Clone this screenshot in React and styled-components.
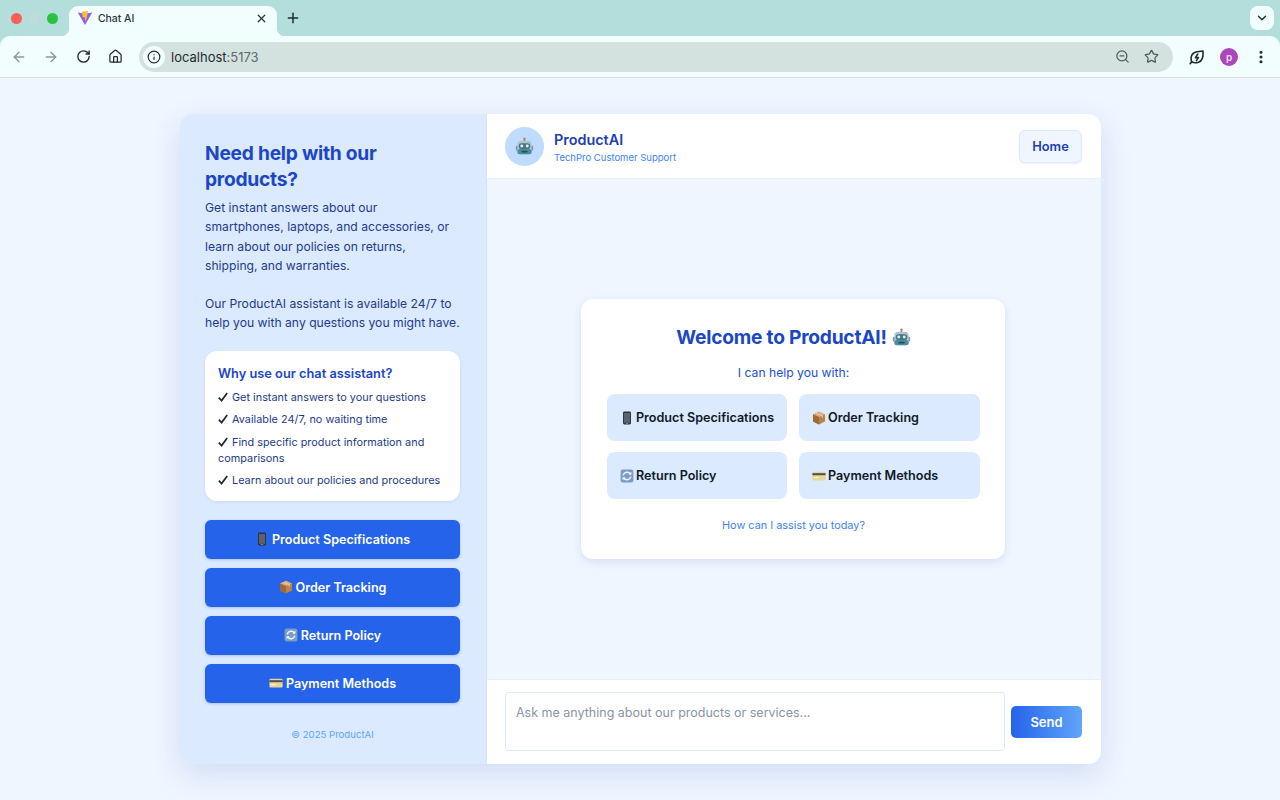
import React from "react";
import styled, { createGlobalStyle } from "styled-components";
import { ArrowLeft, ArrowRight, RotateCw, House, Info, ZoomOut, Star, X, Plus, ChevronDown, EllipsisVertical } from "lucide-react";

const Global = createGlobalStyle`
  html, body { margin: 0; padding: 0; height: 100%; background: #eff6ff; }
  body { font-family: Inter, "Liberation Sans", sans-serif; overflow: hidden; }
  * { box-sizing: border-box; }
`;

const Screen = styled.div`height: 800px; display: flex; flex-direction: column; background: #eff6ff;`;
const BrowserFrame = styled.header`background: #b3dedb; flex: none;`;
const TabStrip = styled.div`height: 36px; display: flex; align-items: center; padding: 0 6px 0 10.5px;`;
const Lights = styled.div`display: flex; gap: 7px; margin-right: 11.5px;`;
const Light = styled.span`width: 11px; height: 11px; border-radius: 50%; background: ${p => p.$c};`;
const Tab = styled.div`
  position: relative; width: 208px; height: 30px; margin-top: 6px; background: #f2fefe;
  border-radius: 9px 9px 0 0; display: flex; align-items: center; padding: 0 9px 6px 8px;
  color: #27363a; font-size: 10.4px;
  &::before, &::after { content: ""; position: absolute; bottom: 0; width: 8px; height: 8px; }
  &::before { left: -8px; background: radial-gradient(circle at 0 0, transparent 8px, #f2fefe 8.5px); }
  &::after { right: -8px; background: radial-gradient(circle at 100% 0, transparent 8px, #f2fefe 8.5px); }
`;
const TabTitle = styled.span`flex: 1; margin-left: 5px; font-weight: 500;`;
const NewTab = styled.span`display: flex; margin-left: 8px; color: #1e2c2e;`;
const Spacer = styled.div`flex: 1;`;
const TabMenu = styled.span`width: 24px; height: 24px; border-radius: 8px; background: #f2fefe; display: flex; align-items: center; justify-content: center; color: #1e2c2e;`;
const Toolbar = styled.div`
  height: 42px; background: #f2fefe; border-radius: 10px 10px 0 0; border-bottom: 1px solid #d3dede;
  display: flex; align-items: center; padding: 0 3px;
`;
const ToolButton = styled.span`width: 32px; height: 32px; display: flex; align-items: center; justify-content: center; color: ${p => p.$c || "#1f2b2d"}; flex: none;`;
const Omnibox = styled.div`flex: 1; height: 30px; margin: 0 8px 0 8px; border-radius: 15px; background: #d4e2df; display: flex; align-items: center; padding: 0 7px 0 4px;`;
const InfoChip = styled.span`width: 22px; height: 22px; border-radius: 50%; background: #f2fefe; display: flex; align-items: center; justify-content: center; color: #1f2b2d;`;
const Url = styled.span`flex: 1; margin-left: 6px; font-size: 13px; color: #1f2b2d; b { font-weight: 400; color: #5c6a6b; }`;
const OmniIcon = styled.span`width: 29px; display: flex; justify-content: center; color: #4e5b5c;`;
const Avatar = styled.span`width: 18px; height: 18px; border-radius: 50%; background: #ab47bc; color: #f4dcf8; font-size: 10px; font-weight: 600; display: flex; align-items: center; justify-content: center;`;

const Stage = styled.main`flex: 1; display: flex; justify-content: center; padding-top: 36px; padding-left: 1px;`;
const Card = styled.div`width: 921px; height: 650px; border-radius: 13px; overflow: hidden; display: flex; box-shadow: 0 10px 32px rgba(30,64,175,.14);`;
const Sidebar = styled.aside`width: 307px; flex: none; background: #dbeafe; padding: 27px 26px 0 25px; display: flex; flex-direction: column; border-right: 1px solid #d5e3f8;`;
const SideTitle = styled.h1`margin: 0 0 6px; font-size: 19.2px; line-height: 25.6px; font-weight: 700; color: #1c47c4; letter-spacing: -.24px;`;
const SideText = styled.p`margin: 0 0 19.2px; font-size: 12.16px; line-height: 19.2px; color: #1e3a8a;`;
const Benefits = styled.section`margin-top: -0.8px; height: 150px; background: #fff; border-radius: 12px; padding: 14px 13px 0; box-shadow: 0 1px 3px rgba(30,64,175,.1);`;
const BenefitsTitle = styled.h2`margin: 0 0 6px; font-size: 12.8px; line-height: 18px; font-weight: 600; color: #1c47c4;`;
const BenefitList = styled.ul`list-style: none; margin: 0; padding: 0; display: flex; flex-direction: column; gap: 6.4px;`;
const Benefit = styled.li`font-size: 10.88px; line-height: 16px; color: #1e3a8a;`;
const TickMark = styled.svg`width: 10px; height: 10px; margin-right: 4px; vertical-align: -1px; fill: none; stroke: #1f2937; stroke-width: 1.7;`;
const ActionStack = styled.div`margin-top: 19px; display: flex; flex-direction: column; gap: 9px;`;
const ActionButton = styled.button`
  height: 39px; border: 0; border-radius: 6px; background: #2563eb; color: #fff; font: 600 12.6px Inter, sans-serif;
  display: flex; align-items: center; justify-content: center; gap: 3px; box-shadow: 0 1px 3px rgba(30,64,175,.25);
`;
const Copyright = styled.footer`margin-top: 25px; text-align: center; font-size: 9.6px; line-height: 13px; color: #60a5fa;`;

const ChatPane = styled.section`flex: 1; display: flex; flex-direction: column; min-width: 0; background: #eff6ff;`;
const ChatHeader = styled.div`height: 65px; flex: none; background: #fff; border-bottom: 1px solid #e6effc; display: flex; align-items: center; padding: 0 19px 0 18px;`;
const Bot = styled.span`width: 39px; height: 39px; border-radius: 50%; background: #bfdbfe; display: flex; align-items: center; justify-content: center;`;
const Brand = styled.div`margin: 2px 0 0 10px; flex: 1;`;
const BrandName = styled.div`font-size: 14.4px; line-height: 18px; font-weight: 600; color: #1e40af;`;
const BrandSub = styled.div`margin-top: 2px; font-size: 9.5px; line-height: 13px; color: #3b82f6;`;
const HomeButton = styled.button`width: 63px; height: 33px; border-radius: 6px; border: 1px solid #dbeafe; background: #eff6ff; color: #1e40af; font: 600 12.8px Inter, sans-serif; box-shadow: 0 1px 2px rgba(30,64,175,.08);`;
const Messages = styled.div`flex: 1; display: flex; align-items: center; justify-content: center; padding-right: 2px;`;
const Welcome = styled.div`width: 424px; height: 260px; background: #fff; border-radius: 12px; padding: 25px 25px 0 26px; box-shadow: 0 3px 8px rgba(30,64,175,.12); display: flex; flex-direction: column; align-items: center;`;
const WelcomeTitle = styled.h2`margin: 0; font-size: 19.2px; line-height: 26px; font-weight: 700; color: #1c47c4; display: flex; align-items: center; gap: 5px; letter-spacing: -.24px;`;
const WelcomeSub = styled.p`margin: 14px 0 0; font-size: 12.16px; line-height: 18px; color: #1d4ed8;`;
const TopicGrid = styled.div`align-self: stretch; margin-top: 12px; display: grid; grid-template-columns: 180px 181px; gap: 11px 12px;`;
const Topic = styled.div`height: 47px; border-radius: 8px; background: #dbeafe; color: #111827; font-size: 12.6px; font-weight: 600; display: flex; align-items: center; gap: 2px; padding-left: 13px;`;
const Assist = styled.p`margin: 19px 0 0; font-size: 10.88px; line-height: 15px; color: #3b82f6;`;
const Composer = styled.form`height: 85px; flex: none; background: #fff; border-top: 1px solid #e6effc; display: flex; align-items: center; padding: 0 19px 2px 18px; gap: 6px;`;
const Input = styled.textarea`
  width: 500px; height: 59px; padding: 12px 10px 10px; border: 1px solid #dbeafe; border-radius: 3px; resize: none; outline: 0; margin: 0; background: #fff;
  font: 400 12.5px/16px Inter, sans-serif; color: #111827;
  &::placeholder { color: #8a94a3; opacity: 1; }
`;
const Send = styled.button`width: 71px; height: 32px; margin-top: 2px; border: 0; border-radius: 5px; background: linear-gradient(90deg,#2563eb,#60a5fa); color: #fff; font: 600 13px Inter, sans-serif;`;

const ViteLogo = () => (
  <svg width="16" height="16" viewBox="0 0 16 16"><path d="M.8 2.4 8 15 15.2 2.4 8 3.8Z" fill="#8b5cf6" /><path d="M5 1.4 11 .9 9.8 8 8.2 11.6 7.6 7 5.6 7.4Z" fill="#fbbf24" /></svg>
);
const LeafBolt = () => (
  <svg width="16" height="16" viewBox="0 0 16 16" fill="none" stroke="#1f2b2d" strokeWidth="1.6" strokeLinejoin="round" strokeLinecap="round">
    <path d="M2.4 12.6C1 8 3 3.4 8 2.8l6-.8c.4 5-.2 9.8-4.4 11.2-2.8.9-5.4.6-7.2-.6Z" />
    <path d="M8.8 5 6.4 8.6h3L7.4 11.6" />
    <path d="M1.2 14.6 3 12.8" />
  </svg>
);
const BotIcon = ({ s = 19 }) => (
  <svg width={s} height={s} viewBox="0 0 18 18">
    <rect x="8.3" y="1" width="1.4" height="3" fill="#8a6f66" /><circle cx="9" cy="1.6" r="1.1" fill="#d9795c" />
    <rect x=".8" y="8.4" width="2" height="4.4" rx="1" fill="#7b93a0" /><rect x="15.2" y="8.4" width="2" height="4.4" rx="1" fill="#7b93a0" />
    <rect x="2.2" y="3.6" width="13.6" height="12.8" rx="3.6" fill="#a9c5cf" />
    <rect x="2.2" y="11.4" width="13.6" height="5" rx="2.4" fill="#4a8c9b" />
    <rect x="3.6" y="6" width="10.8" height="5.4" rx="2.4" fill="#4d7380" />
    <circle cx="6.4" cy="8.6" r="1.4" fill="#cff3f4" /><circle cx="11.6" cy="8.6" r="1.4" fill="#cff3f4" />
    <rect x="6" y="13" width="6" height="1.6" rx=".8" fill="#1d5260" />
  </svg>
);
const PhoneIcon = () => (
  <svg width="14" height="14" viewBox="0 0 14 14"><rect x="3" y=".5" width="8" height="13" rx="1.4" fill="#2c3238" /><rect x="3.9" y="2" width="6.2" height="9.8" fill="#59636e" /><rect x="5.8" y="12.2" width="2.4" height=".7" fill="#9aa5ad" /></svg>
);
const BoxIcon = () => (
  <svg width="14" height="14" viewBox="0 0 14 14"><path d="M7 .8 13 3.4V10.6L7 13.4 1 10.6V3.4Z" fill="#b9824d" /><path d="M7 6 13 3.4 7 .8 1 3.4Z" fill="#dcae7b" /><path d="M7 6V13.4L1 10.6V3.4Z" fill="#a06a38" /><path d="M3.6 2.3 9.8 5V6.8L10.8 6.4V4.6L4.6 1.9Z" fill="#ecd2ad" /></svg>
);
const ReturnIcon = () => (
  <svg width="14" height="14" viewBox="0 0 14 14"><rect x=".6" y=".6" width="12.8" height="12.8" rx="2.2" fill="#7b9cc4" /><path d="M3.2 6.4A4 4 0 0 1 10.4 5M10.8 7.6A4 4 0 0 1 3.6 9" fill="none" stroke="#f2f5f8" strokeWidth="1.5" /><path d="M11.4 2.8V5.8H8.4ZM2.6 11.2V8.2H5.6Z" fill="#f2f5f8" /></svg>
);
const CardIcon = () => (
  <svg width="14" height="14" viewBox="0 0 14 14"><rect x=".4" y="2.8" width="13.2" height="8.6" rx="1.2" fill="#e8d59a" /><rect x=".4" y="4.2" width="13.2" height="2" fill="#4a4f52" /><rect x="1.6" y="8" width="5" height="1" fill="#fff5d2" /></svg>
);

const topics = [
  [<PhoneIcon key="a" />, "Product Specifications"],
  [<BoxIcon key="b" />, "Order Tracking"],
  [<ReturnIcon key="c" />, "Return Policy"],
  [<CardIcon key="d" />, "Payment Methods"],
];
const benefits = [
  "Get instant answers to your questions",
  "Available 24/7, no waiting time",
  "Find specific product information and comparisons",
  "Learn about our policies and procedures",
];

export default function App() {
  return (
    <Screen>
      <Global />
      <BrowserFrame>
        <TabStrip>
          <Lights>
            <Light $c="#fb5f57" />
            <Light $c="#c0dbd8" />
            <Light $c="#2ac33f" />
          </Lights>
          <Tab>
            <ViteLogo />
            <TabTitle>Chat AI</TabTitle>
            <X size={13} strokeWidth={2.4} />
          </Tab>
          <NewTab><Plus size={16} strokeWidth={2.2} /></NewTab>
          <Spacer />
          <TabMenu><ChevronDown size={14} strokeWidth={2.4} /></TabMenu>
        </TabStrip>
        <Toolbar>
          <ToolButton $c="#8a9696"><ArrowLeft size={16} /></ToolButton>
          <ToolButton $c="#8a9696"><ArrowRight size={16} /></ToolButton>
          <ToolButton><RotateCw size={15} strokeWidth={2.2} /></ToolButton>
          <ToolButton><House size={15} strokeWidth={2} /></ToolButton>
          <Omnibox>
            <InfoChip><Info size={14} /></InfoChip>
            <Url>localhost<b>:5173</b></Url>
            <OmniIcon><ZoomOut size={15} /></OmniIcon>
            <OmniIcon><Star size={15} strokeWidth={2} /></OmniIcon>
          </Omnibox>
          <ToolButton><LeafBolt /></ToolButton>
          <ToolButton><Avatar>p</Avatar></ToolButton>
          <ToolButton><EllipsisVertical size={16} strokeWidth={2.6} /></ToolButton>
        </Toolbar>
      </BrowserFrame>
      <Stage>
        <Card>
          <Sidebar>
            <SideTitle>Need help with our products?</SideTitle>
            <SideText>Get instant answers about our<br />smartphones, laptops, and accessories, or<br />learn about our policies on returns,<br />shipping, and warranties.</SideText>
            <SideText>Our ProductAI assistant is available 24/7 to help you with any questions you might have.</SideText>
            <Benefits>
              <BenefitsTitle>Why use our chat assistant?</BenefitsTitle>
              <BenefitList>
                {benefits.map(b => (
                  <Benefit key={b}>
                    <TickMark viewBox="0 0 10 10"><path d="M.8 5.6 3.6 8.6 9.2 1" /></TickMark>{b}
                  </Benefit>
                ))}
              </BenefitList>
            </Benefits>
            <ActionStack>
              {topics.map(([icon, label]) => <ActionButton key={label} type="button">{icon}{label}</ActionButton>)}
            </ActionStack>
            <Copyright>© 2025 ProductAI</Copyright>
          </Sidebar>
          <ChatPane>
            <ChatHeader>
              <Bot><BotIcon /></Bot>
              <Brand>
                <BrandName>ProductAI</BrandName>
                <BrandSub>TechPro Customer Support</BrandSub>
              </Brand>
              <HomeButton type="button">Home</HomeButton>
            </ChatHeader>
            <Messages>
              <Welcome>
                <WelcomeTitle>Welcome to ProductAI! <BotIcon /></WelcomeTitle>
                <WelcomeSub>I can help you with:</WelcomeSub>
                <TopicGrid>
                  {topics.map(([icon, label]) => <Topic key={label}>{icon}{label}</Topic>)}
                </TopicGrid>
                <Assist>How can I assist you today?</Assist>
              </Welcome>
            </Messages>
            <Composer>
              <Input placeholder="Ask me anything about our products or services..." />
              <Send type="button">Send</Send>
            </Composer>
          </ChatPane>
        </Card>
      </Stage>
    </Screen>
  );
}
